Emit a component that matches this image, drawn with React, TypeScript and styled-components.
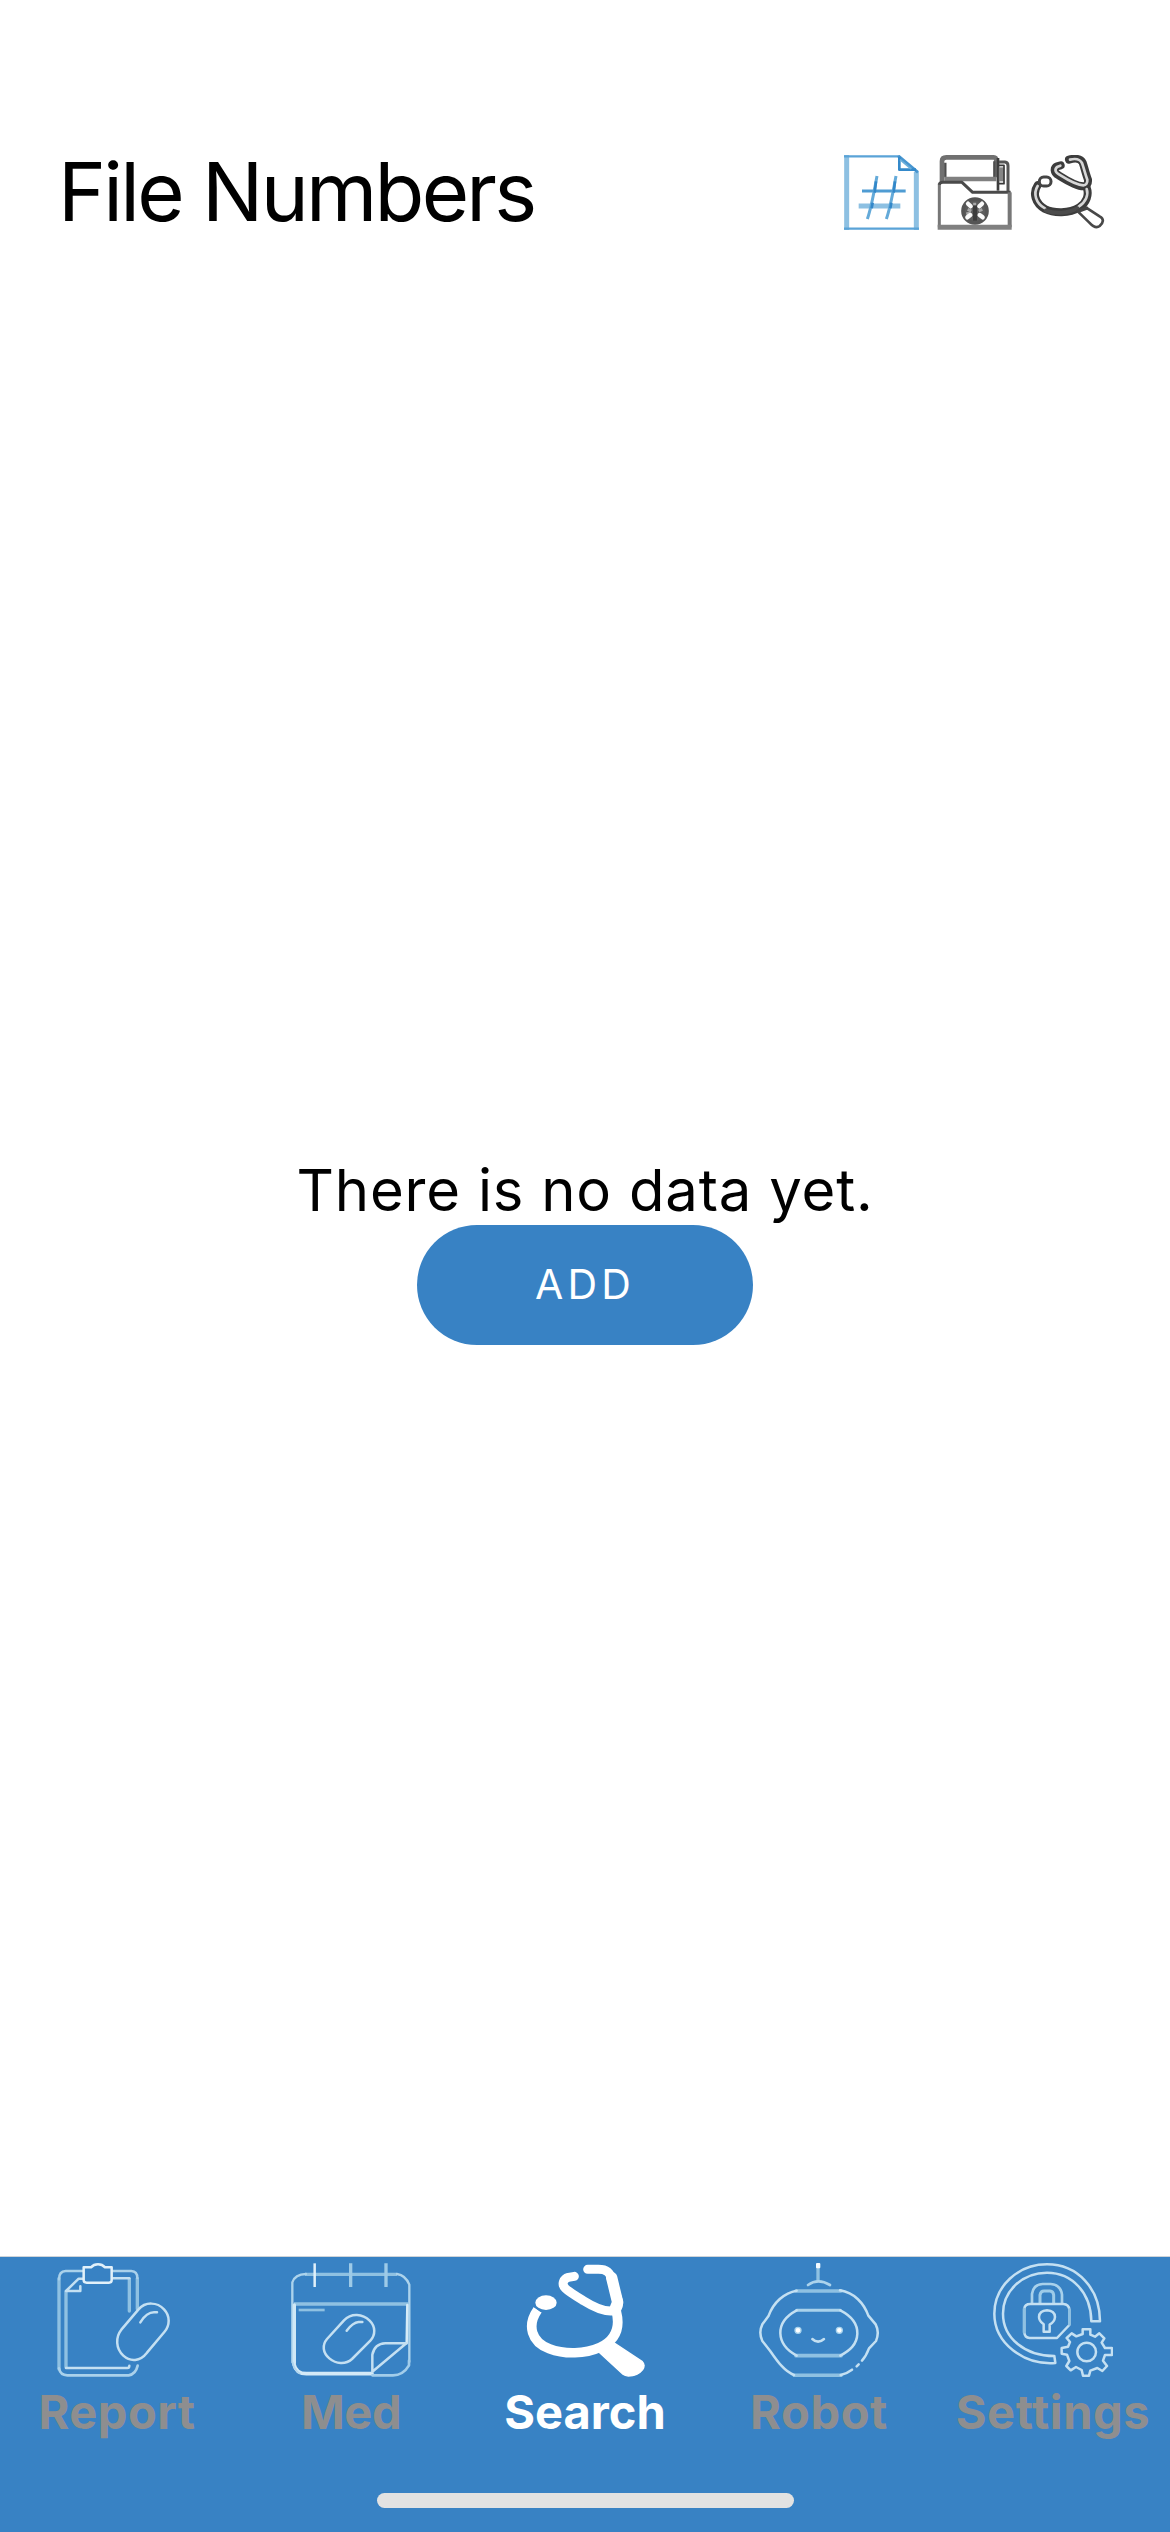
import React, { ReactNode } from 'react';
import styled, { createGlobalStyle } from 'styled-components';

const GlobalStyle = createGlobalStyle`
  * { box-sizing: border-box; }
  body { margin: 0; background: #fff; }
`;

const Screen = styled.div`
  display: flex;
  flex-direction: column;
  width: 1170px;
  height: 2532px;
  overflow: hidden;
  background: #fff;
  color: #000;
  font-family: Inter, Roboto, sans-serif;
`;

const Header = styled.header`
  display: flex;
  align-items: flex-start;
  justify-content: space-between;
  height: 250px;
  padding: 155px 65px 0 58px;
`;

const Title = styled.h1`
  margin: -13px 0 0;
  font-size: 81.4px;
  line-height: 99px;
  font-weight: 400;
  letter-spacing: -2.75px;
  white-space: nowrap;
`;

const HeaderActions = styled.div`
  display: flex;
  gap: 18px;
`;

const IconButton = styled.button`
  display: flex;
  width: 75px;
  height: 75px;
  padding: 0;
  border: 0;
  background: none;
`;

const HeaderIcon = styled.svg`
  width: 75px;
  height: 75px;
  fill: none;
  stroke-linejoin: round;
`;

const Content = styled.main`
  display: flex;
  flex: 1;
  flex-direction: column;
  align-items: center;
  padding-top: 905px;
`;

const EmptyMessage = styled.p`
  margin: 0;
  font-size: 58px;
  line-height: 70px;
  letter-spacing: 0.8px;
  white-space: nowrap;
`;

const AddButton = styled.button`
  width: 336px;
  height: 120px;
  padding: 0 0 2px;
  border: 0;
  border-radius: 60px;
  background: #3882c4;
  color: #fff;
  font: 400 41px/50px Inter, Roboto, sans-serif;
  letter-spacing: 4.1px;
`;

const TabBar = styled.nav`
  display: grid;
  grid-template-columns: repeat(5, 234px);
  grid-template-rows: 236px 15px;
  height: 276px;
  border-top: 1px solid #cfd4d9;
  background: #3882c4;
`;

const Tab = styled.a<{ $active?: boolean; $spacing: number }>`
  display: flex;
  flex-direction: column;
  align-items: center;
  padding-top: 6px;
  color: ${(p) => (p.$active ? '#fff' : '#8e8e8f')};
  font-size: 47px;
  line-height: 56px;
  font-weight: 700;
  letter-spacing: ${(p) => p.$spacing}px;
  white-space: nowrap;
`;

const TabIcon = styled.svg`
  width: 120px;
  height: 114px;
  margin-bottom: 7px;
  fill: none;
  stroke: #c4e0f2;
  stroke-width: 7.5;
  stroke-linecap: round;
  stroke-linejoin: round;
`;

const HomeIndicator = styled.div`
  grid-column: 1 / -1;
  justify-self: center;
  width: 417px;
  height: 15px;
  border-radius: 8px;
  background: #e2e2e2;
`;

const SOFT = '#8fc1e2';

function HashFileIcon() {
  return (
    <HeaderIcon viewBox="42 45 225 225">
      <g stroke="#8dc0e2">
        <path d="M50 45V270M259 96V270" strokeWidth="15" />
        <path d="M86 198H211" strokeWidth="15" />
      </g>
      <g stroke="#5aa3d7" strokeWidth="7">
        <path d="M42 49H204M42 266H267" />
        <path d="M204 47L264 97" stroke="#4795d0" strokeWidth="9" />
        <path d="M208 50V89H258" stroke="#3489ca" strokeWidth="8" />
        <path d="M210 59L244 87" stroke="#6aadd9" strokeWidth="5" />
      </g>
      <path d="M96 153H227" stroke="#4f9cd3" strokeWidth="9" />
      <path d="M141 108C133 150 125 200 112 237M198 108C190 150 182 200 169 237" stroke="#64aad9" strokeWidth="9" />
      <path d="M138 124L134 158M195 124L191 158M128 188L125 205M184 188L181 205" stroke="#3287c9" strokeWidth="8" />
    </HeaderIcon>
  );
}

function MedicalFolderIcon() {
  return (
    <HeaderIcon viewBox="36 45 225 225" stroke="#4a4a4a" strokeWidth="8">
      <path d="M51 126V64Q51 52 64 52H206Q214 52 214 64V112" stroke="#707070" strokeWidth="14" />
      <path d="M61 68V112M208 64V112" stroke="#4d4d4d" strokeWidth="7" />
      <path d="M58 117H214" stroke="#808080" strokeWidth="14" />
      <path d="M219 54V152" stroke="#3c3c3c" strokeWidth="8" />
      <path d="M222 66H240Q249 67 249 77V153" stroke="#555" strokeWidth="9" />
      <path d="M229 82V124" stroke="#858585" strokeWidth="15" />
      <path d="M222 76H237V131H222" stroke="#383838" strokeWidth="5" />
      <path d="M43 131V262" stroke="#777" strokeWidth="9" />
      <path d="M43 134Q44 127 54 127H111L143 157H257" stroke="#4a4a4a" strokeWidth="9" />
      <path d="M254 157V262" stroke="#777" strokeWidth="12" />
      <path d="M38 262H260" stroke="#808080" strokeWidth="15" />
      <circle cx="150" cy="213" r="36" fill="#5c5c5c" stroke="#555" strokeWidth="11" />
      <path d="M128 208L139 213M172 208L161 213M149 188V198M124 222L137 219" stroke="#a8a8a8" strokeWidth="9" />
      <path d="M129 191L137 199M171 191L163 199M127 232L136 225M173 232L164 225" stroke="#fafafa" strokeWidth="13" strokeLinecap="round" />
      <path d="M150 196V242" stroke="#3c3c3c" strokeWidth="12" />
    </HeaderIcon>
  );
}

function StethoscopeOutlineIcon() {
  return (
    <HeaderIcon viewBox="30 45 225 225" strokeLinecap="round">
      <g stroke="#3c3c3c" strokeWidth="24">
        <path d="M147 59C164 54 182 55 188 68C193 82 198 104 204 119C205 130 200 139 190 139C170 139 138 120 116 106C100 97 102 84 111 79L122 76" />
        <path d="M200 143C208 164 200 188 178 202C148 221 101 220 75 207C45 190 37 159 53 136" />
      </g>
      <g stroke="#d6d6d6" strokeWidth="8">
        <path d="M150 59C166 55 180 58 186 69C191 82 196 104 202 119C203 129 198 136 190 136C171 136 140 118 118 104C103 95 104 86 113 80L121 77" />
        <path d="M200 147C206 164 198 186 176 200" />
        <path d="M75 205C47 190 39 160 53 138" />
      </g>
      <path d="M78 212C105 222 143 221 172 205" stroke="#4c4c4c" strokeWidth="12" />
      <rect x="58" y="111" width="35" height="27" rx="13" fill="#fff" stroke="#444" strokeWidth="9" />
      <path d="M174 215L208 248C218 259 228 267 239 258C251 247 252 237 240 230L202 205Z" fill="#fff" stroke="#484848" strokeWidth="8" />
      <path d="M172 212L200 203" stroke="#444" strokeWidth="8" />
    </HeaderIcon>
  );
}

function ReportIcon() {
  return (
    <TabIcon viewBox="81 54 360 342">
      <path d="M87 100V372M322 100V192" stroke={SOFT} strokeWidth="10" />
      <path d="M108 140V366M298 102V198" stroke={SOFT} strokeWidth="10" />
      <path d="M158 78H107Q87 79 87 103M248 78H304Q322 79 322 99" stroke="#a9d1eb" />
      <path d="M87 370Q91 391 112 391H296Q317 388 323 362" stroke="#a9d1eb" strokeWidth="8" />
      <path d="M108 369H292Q298 369 298 362" />
      <path d="M249 100H298" />
      <path d="M158 101H146L108 138H151V124" />
      <path d="M161 67H183Q191 58 204 58Q217 58 225 67H245V106Q245 113 237 113H170Q161 113 161 106Z" stroke="#e2f1fa" />
      <path d="M274 254L325 194C346 169 382 171 402 193C421 213 420 241 403 261L351 323C330 350 301 351 280 332C257 311 256 276 274 254Z" />
      <path d="M331 232Q350 202 372 202H381" />
    </TabIcon>
  );
}

function MedIcon() {
  return (
    <TabIcon viewBox="63 54 360 342">
      <path d="M105 88H381M72 177H414" stroke={SOFT} strokeWidth="10" strokeLinecap="butt" />
      <path d="M67 352V112Q75 88 108 87M381 87Q407 91 418 119V350" stroke="#acd3ec" strokeWidth="7" />
      <path d="M73 180V354" stroke="#cfe8f6" strokeWidth="10" />
      <path d="M72 358Q78 386 109 386H306" stroke="#d4eaf7" strokeWidth="11" />
      <path d="M68 352Q71 373 89 385" strokeWidth="5" stroke="#b0d6ee" />
      <path d="M307 391H369Q400 390 417 361V347" stroke="#a2cdea" strokeWidth="8" />
      <path d="M412 180L410 295" stroke="#d5ebf7" />
      <path d="M134 55V126" stroke="#e0f0fa" strokeLinecap="butt" />
      <path d="M242 55V126M348 55V126" stroke="#9dcae7" strokeWidth="10" strokeLinecap="butt" />
      <path d="M86 195H164" stroke={SOFT} strokeWidth="8" strokeLinecap="butt" />
      <path d="M171 282L222 226C244 203 278 206 299 227C317 245 317 269 301 287L246 342C226 360 198 357 178 340C158 323 156 300 171 282Z" />
      <path d="M230 257Q248 233 266 231H277" />
      <path d="M307 380V329Q314 296 346 295H409Z" />
    </TabIcon>
  );
}

function SearchIcon() {
  return (
    <TabIcon viewBox="90 54 360 342">
      <g stroke="#fff">
        <path d="M278 73H310C333 73 346 82 349 103L370 168C373 184 367 197 349 198C320 199 286 180 267 168C239 151 222 141 211 130C198 117 206 101 220 97L238 94" strokeWidth="27" />
        <path d="M350 98L368 172L360 192" strokeWidth="34" />
        <path d="M128 194C95 241 109 291 163 311C210 329 270 327 315 307C360 286 377 251 364 200" strokeWidth="29" strokeLinecap="butt" />
      </g>
      <path d="M115 183L138 199" stroke="#3882c4" strokeWidth="4" />
      <ellipse cx="153" cy="173" rx="32" ry="22" fill="#fff" stroke="none" />
      <path d="M314 323L384 388Q390 393 400 393C420 393 433 387 443 374Q452 360 442 350L358 294L332 300Z" fill="#fff" stroke="#fff" strokeWidth="4" />
    </TabIcon>
  );
}

function RobotIcon() {
  return (
    <TabIcon viewBox="87 54 360 342">
      <path d="M264 60V106" stroke={SOFT} strokeWidth="10" />
      <rect x="258" y="54" width="13" height="16" rx="3" fill="#f4faff" stroke="none" />
      <path d="M234 120Q264 98 300 120" stroke="#acd3ec" strokeWidth="8" />
      <path d="M198 138H333M198 332H333M193 391H333" stroke={SOFT} strokeWidth="11" />
      <path d="M200 196H331" stroke="#a9d2eb" strokeWidth="9" />
      <path d="M200 137C163 143 130 173 116 212L97 238Q85 262 97 288L120 317C145 353 164 379 192 390" />
      <path d="M330 136C373 143 402 175 415 212L437 238Q449 262 438 288L417 310C411 326 404 338 396 347M386 358L380 364M366 374Q350 386 332 390" />
      <path d="M200 196C168 213 150 233 151 265C152 298 174 318 200 332M331 196C364 213 383 237 382 266C381 299 359 317 331 332" />
      <g fill="#fff" stroke="#a8d3ed" strokeWidth="4">
        <circle cx="204" cy="256" r="9" />
        <circle cx="328" cy="256" r="9" />
      </g>
      <path d="M247 282Q264 298 282 282" />
    </TabIcon>
  );
}

function SettingsIcon() {
  return (
    <TabIcon viewBox="129 54 360 342">
      <path d="M316 354C221 361 133 294 133 206C133 124 204 58 291 58C383 58 450 131 450 229H424C423 145 368 83 291 83C217 83 159 138 159 206C159 279 225 333 313 333Z" />
      <path d="M246 174V147Q250 118 278 117H302Q332 119 336 149V174" stroke="#a8d1eb" strokeWidth="8" />
      <path d="M270 174V150Q272 138 282 138H300Q310 139 311 150V174" stroke="#9dcbe8" strokeWidth="9" />
      <path d="M223 191Q224 177 241 177H340Q357 178 358 194V240L321 279H239Q224 278 223 263Z" />
      <path d="M222 192V262M358 194V238" stroke={SOFT} strokeWidth="8" />
      <path d="M281 260V238Q267 228 267 216Q268 197 291 196Q314 197 315 216Q314 230 299 239V260Z" />
      <path d="M398 253H421V269L435 275L448 265L463 280L455 293L465 309H486V330H465L459 347L471 363L457 378L442 369L421 377L417 392H399L395 375L378 366L362 376L349 363L358 348L351 329L335 326V309L354 305L360 291L350 279L365 265L379 274L398 267Z" />
      <circle cx="410" cy="321" r="28" />
    </TabIcon>
  );
}

const headerActions: { label: string; icon: ReactNode }[] = [
  { label: 'File numbers', icon: <HashFileIcon /> },
  { label: 'Medical records', icon: <MedicalFolderIcon /> },
  { label: 'Examinations', icon: <StethoscopeOutlineIcon /> },
];

const tabs: { label: string; icon: ReactNode; spacing: number; active?: boolean }[] = [
  { label: 'Report', icon: <ReportIcon />, spacing: 0.5 },
  { label: 'Med', icon: <MedIcon />, spacing: -0.4 },
  { label: 'Search', icon: <SearchIcon />, spacing: 0, active: true },
  { label: 'Robot', icon: <RobotIcon />, spacing: 0.6 },
  { label: 'Settings', icon: <SettingsIcon />, spacing: 0.64 },
];

export default function App() {
  return (
    <Screen>
      <GlobalStyle />
      <Header>
        <Title>File Numbers</Title>
        <HeaderActions>
          {headerActions.map((action) => (
            <IconButton key={action.label} aria-label={action.label}>
              {action.icon}
            </IconButton>
          ))}
        </HeaderActions>
      </Header>
      <Content>
        <EmptyMessage>There is no data yet.</EmptyMessage>
        <AddButton>ADD</AddButton>
      </Content>
      <TabBar>
        {tabs.map((tab) => (
          <Tab key={tab.label} $active={tab.active} $spacing={tab.spacing}>
            {tab.icon}
            {tab.label}
          </Tab>
        ))}
        <HomeIndicator />
      </TabBar>
    </Screen>
  );
}
